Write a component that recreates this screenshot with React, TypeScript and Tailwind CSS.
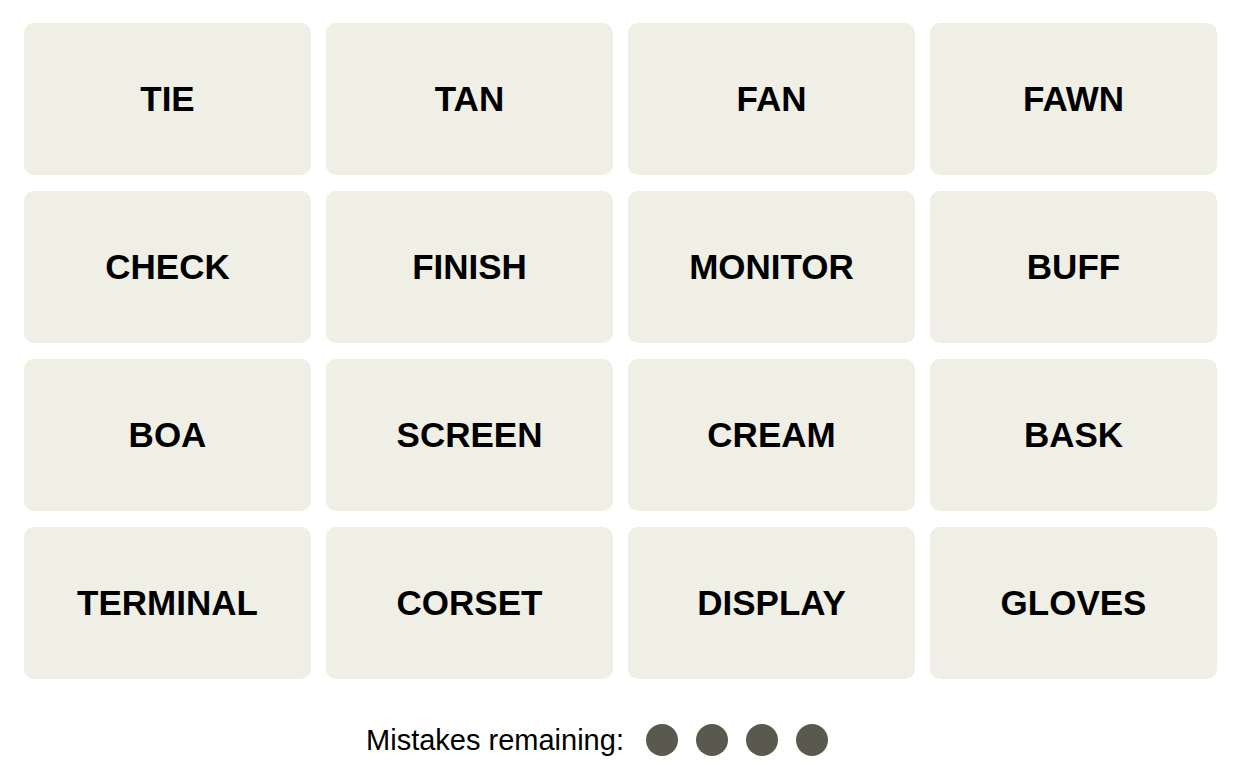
const words = [
  "TIE", "TAN", "FAN", "FAWN",
  "CHECK", "FINISH", "MONITOR", "BUFF",
  "BOA", "SCREEN", "CREAM", "BASK",
  "TERMINAL", "CORSET", "DISPLAY", "GLOVES",
];

const Tile = ({ word }: { word: string }) => {
  return (
    <div className="flex h-[152px] items-center justify-center rounded-[10px] bg-[#efefe6] text-[35px] font-bold text-black">
      {word}
    </div>
  );
};

export default function App() {
  return (
    <div className="min-h-[771px] w-[1250px] bg-white font-['Liberation_Sans',Arial,sans-serif]">
      <div className="grid grid-cols-[repeat(4,287px)] gap-x-[15px] gap-y-[16px] pl-[24px] pt-[23px]">
        {words.map((w) => (
          <Tile key={w} word={w} />
        ))}
      </div>
      {/* mistakes counter */}
      <div className="mt-[45px] flex items-center justify-center pr-[56px]">
        <span className="text-[29px] leading-none text-black">Mistakes remaining:</span>
        <div className="ml-[22px] flex gap-[18px]">
          {[0, 1, 2, 3].map((i) => (
            <div key={i} className="h-[32px] w-[32px] rounded-full bg-[#5a594e]" />
          ))}
        </div>
      </div>
    </div>
  );
}
